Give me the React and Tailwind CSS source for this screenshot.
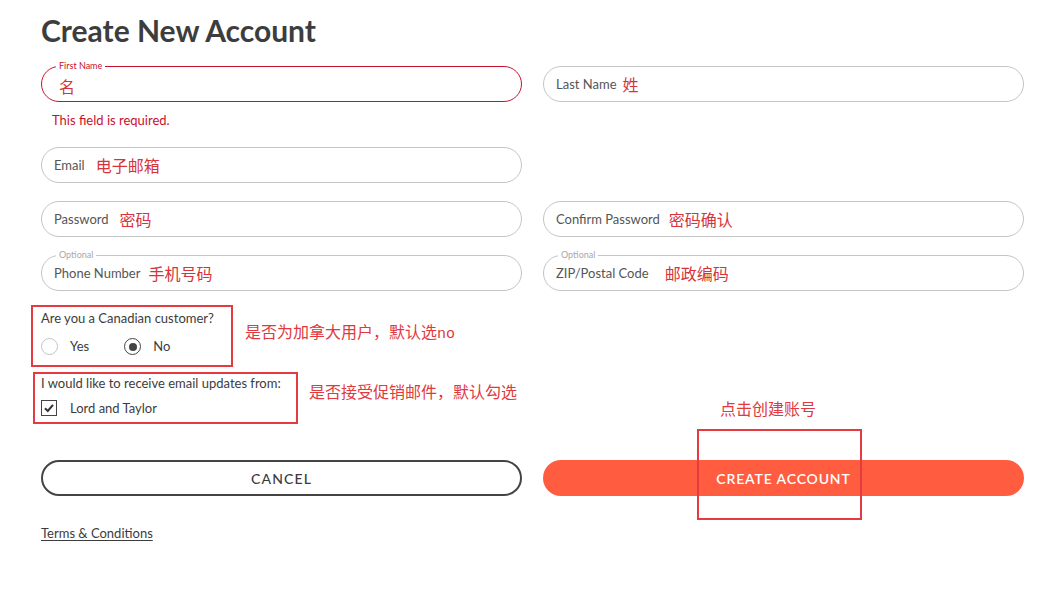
import React from 'react';

const cjk = "font-['Noto_Sans_CJK_SC',sans-serif]";

function Field({ label, value, notch, error, gapClass = 'ml-[8px]' }) {
  const border = error ? 'border-[#c8102e]' : 'border-[#c4c4c4]';
  return (
    <div className={`relative h-[36px] rounded-full border ${border} flex items-center pl-[12px]`}>
      {notch && (
        <span
          className={`absolute -top-[7px] left-[14px] bg-white px-[3px] text-[9px] leading-[12px] ${
            error ? 'text-[#c8102e]' : 'text-[#a8a8a8]'
          }`}
        >
          {notch}
        </span>
      )}
      {label && <span className="text-[13px] text-[#555] leading-[16px]">{label}</span>}
      <span className={`${label ? gapClass : 'ml-[5px] mt-[4px]'} ${cjk} text-[16px] leading-[20px] text-[#d6333b]`}>
        {value}
      </span>
    </div>
  );
}

function Radio({ checked, label }) {
  return (
    <div className="flex items-center">
      <span
        className={`flex h-[17px] w-[17px] items-center justify-center rounded-full border ${
          checked ? 'border-[#444] border-[1.5px]' : 'border-[#c4c4c4]'
        }`}
      >
        {checked && <span className="h-[8px] w-[8px] rounded-full bg-[#444]" />}
      </span>
      <span className="ml-[12px] text-[13px] text-[#3c3c3c]">{label}</span>
    </div>
  );
}

export default function App() {
  return (
    <div className="relative min-h-[596px] w-[1063px] bg-white font-['Lato',sans-serif] text-[#3c3c3c]">
      <div className="ml-[41px] w-[983px] pt-[12px]">
        <h1 className="text-[30px] font-bold leading-[36px] text-[#3d3d3d]">Create New Account</h1>

        {/* name row */}
        <div className="mt-[18px] grid grid-cols-2 gap-x-[21px]">
          <div>
            <Field notch="First Name" value="名" error />
            <p className="ml-[11px] mt-[10px] text-[13px] leading-[16px] text-[#c8102e]">This field is required.</p>
          </div>
          <Field label="Last Name" value="姓" gapClass="ml-[6px]" />
        </div>

        <div className="mt-[19px] grid grid-cols-2 gap-x-[21px]">
          <Field label="Email" value="电子邮箱" gapClass="ml-[11px]" />
          <div />
        </div>

        <div className="mt-[18px] grid grid-cols-2 gap-x-[21px]">
          <Field label="Password" value="密码" gapClass="ml-[11px]" />
          <Field label="Confirm Password" value="密码确认" gapClass="ml-[9px]" />
        </div>

        <div className="mt-[18px] grid grid-cols-2 gap-x-[21px]">
          <Field notch="Optional" label="Phone Number" value="手机号码" gapClass="ml-[8px]" />
          <Field notch="Optional" label="ZIP/Postal Code" value="邮政编码" gapClass="ml-[16px]" />
        </div>

        {/* canadian */}
        <div className="-ml-[10px] mt-[14px] flex items-center">
          <div className="w-[202px] border-2 border-[#e53a3f] pb-[8px] pl-[8px] pt-[2px]">
            <p className="text-[13px] leading-[18px]">Are you a Canadian customer?</p>
            <div className="mt-[10px] flex items-center">
              <Radio label="Yes" />
              <div className="ml-[35px]">
                <Radio checked label="No" />
              </div>
            </div>
          </div>
          <span className={`ml-[12px] mb-[7px] ${cjk} text-[16px] text-[#e0393e]`}>
            是否为加拿大用户，默认选<span className="font-['Liberation_Mono',monospace] text-[15px]">no</span>
          </span>
        </div>

        {/* email updates */}
        <div className="-ml-[8px] mt-[5px] flex items-start">
          <div className="w-[265px] border-2 border-[#e53a3f] pb-[4px] pl-[6px] pt-0">
            <p className="text-[13px] leading-[18px]">I would like to receive email updates from:</p>
            <div className="mt-[7px] flex items-center">
              <span className="flex h-[16px] w-[16px] items-center justify-center border-[1.5px] border-[#444]">
                <svg width="12" height="12" viewBox="0 0 12 12">
                  <path d="M2 6.3 L4.8 9 L10 2.8" fill="none" stroke="#333" strokeWidth="2" />
                </svg>
              </span>
              <span className="ml-[13px] text-[13px]">Lord and Taylor</span>
            </div>
          </div>
          <span className={`ml-[11px] mt-[7px] ${cjk} text-[16px] text-[#e0393e]`}>是否接受促销邮件，默认勾选</span>
        </div>

        {/* buttons */}
        <div className="mt-[36px] grid grid-cols-2 gap-x-[21px]">
          <button className="h-[36px] rounded-full border-2 border-[#444] text-[14px] font-medium tracking-[0.08em] text-[#3c3c3c]">
            CANCEL
          </button>
          <button className="h-[36px] rounded-full bg-[#ff5c40] text-[14px] font-semibold tracking-[0.06em] text-white">
            CREATE ACCOUNT
          </button>
        </div>

        <a className="mt-[29px] inline-block text-[13px] leading-[16px] text-[#3c3c3c] underline underline-offset-2">
          Terms &amp; Conditions
        </a>
      </div>

      {/* annotation overlay */}
      <span className={`absolute left-[720px] top-[397px] ${cjk} text-[16px] leading-[22px] text-[#e0393e]`}>点击创建账号</span>
      <div className="pointer-events-none absolute left-[697px] top-[429px] h-[91px] w-[165px] border-2 border-[#e53a3f]" />
    </div>
  );
}
